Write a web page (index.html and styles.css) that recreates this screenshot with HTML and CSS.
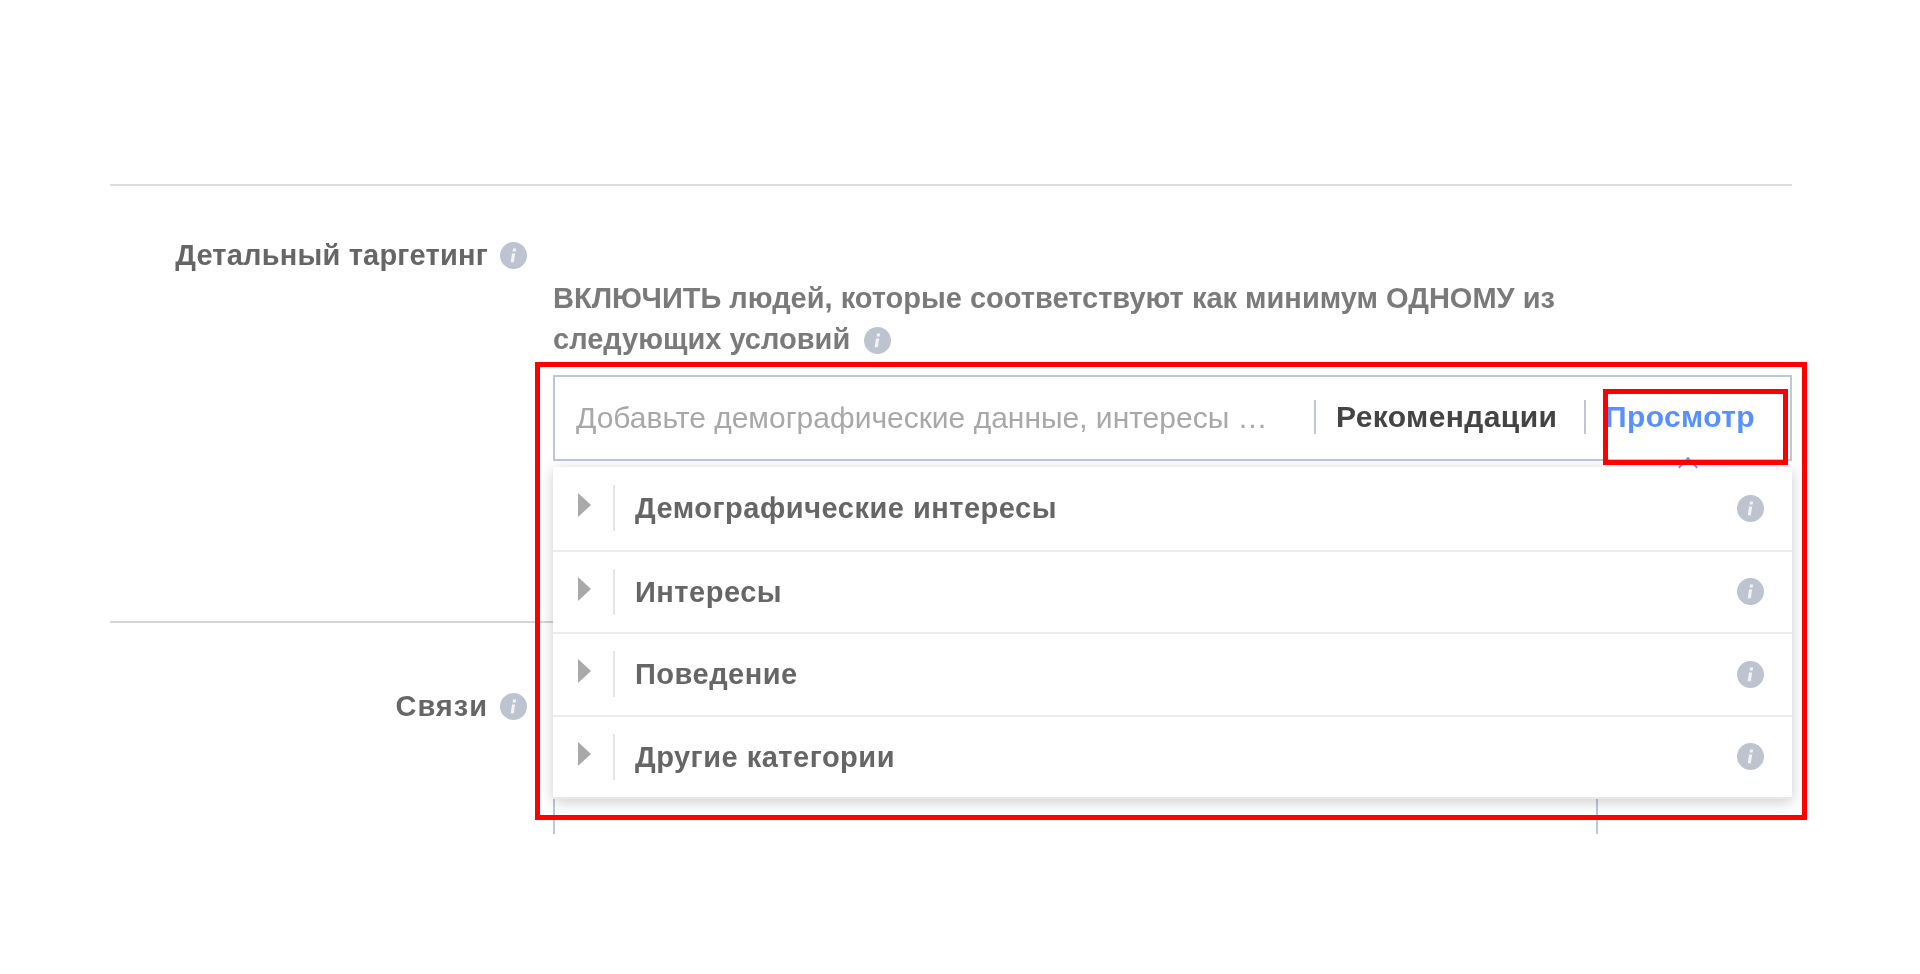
FILE: index.html
```html
<!DOCTYPE html>
<html lang="ru">
<head>
<meta charset="utf-8">
<title>Детальный таргетинг</title>
<link rel="stylesheet" href="styles.css">
</head>
<body>
<svg class="defs" width="0" height="0" aria-hidden="true">
  <symbol id="info" viewBox="0 0 26 26">
    <circle cx="13" cy="13" r="13" fill="#bec4cf"/>
    <path d="M12.6 6.2h3l-.5 3h-3zM11.6 11h3l-1.3 8.6h-3z" fill="#f1f3f6"/>
  </symbol>
</svg>
<main class="panel">
  <section class="row row-targeting">
    <div class="label"><span>Детальный таргетинг</span><svg class="info"><use href="#info"/></svg></div>
    <div class="body">
      <p class="hint">ВКЛЮЧИТЬ людей, которые соответствуют как минимум ОДНОМУ из следующих условий<svg class="info info-inline"><use href="#info"/></svg></p>
      <div class="search">
        <span class="placeholder">Добавьте демографические данные, интересы …</span>
        <span class="tab tab-suggest">Рекомендации</span>
        <span class="tab tab-browse">Просмотр</span>
      </div>
    </div>
  </section>
  <section class="row row-links">
    <div class="label label-links"><span>Связи</span><svg class="info"><use href="#info"/></svg></div>
    <div class="body">
      <div class="links-box"><span class="links-text">Добавьте Связи</span></div>
    </div>
  </section>
  <div class="menu">
    <div class="menu-item"><i class="arrow"></i><span class="menu-text">Демографические интересы</span><svg class="info"><use href="#info"/></svg></div>
    <div class="menu-item"><i class="arrow"></i><span class="menu-text">Интересы</span><svg class="info"><use href="#info"/></svg></div>
    <div class="menu-item"><i class="arrow"></i><span class="menu-text">Поведение</span><svg class="info"><use href="#info"/></svg></div>
    <div class="menu-item"><i class="arrow"></i><span class="menu-text">Другие категории</span><svg class="info"><use href="#info"/></svg></div>
  </div>
  <div class="caret"></div>
  <div class="frame frame-large"></div>
  <div class="frame frame-small"></div>
</main>
</body>
</html>
```
FILE: styles.css
```css
* { box-sizing: border-box; }
html, body { margin: 0; height: 974px; background: #fff; overflow: hidden; }
body { font-family: "Liberation Sans", Arial, sans-serif; color: #666; }
.defs { position: absolute; }
.panel { position: relative; width: 1810px; height: 650px; margin: 184px 0 0 110px; overflow: hidden; filter: blur(.5px); }
.row { display: grid; grid-template-columns: 417px 1239px; column-gap: 26px; width: 1682px; border-top: 2px solid #dcdddf; }
.row-targeting { height: 437px; }
.row-links { height: 300px; border-top-color: #d4d5d7; }
.label { display: flex; justify-content: flex-end; align-items: center; gap: 12px; height: 34px; margin-top: 52px; font-size: 29px; font-weight: 700; letter-spacing: .2px; color: #666; }
.label-links { margin-top: 66px; letter-spacing: 1px; }
.info { display: block; flex: none; width: 27px; height: 27px; }
.body { min-width: 0; }
.hint { width: 1090px; margin: 92px 0 0; font-size: 29px; line-height: 41px; font-weight: 700; color: #7a7a7a; }
.info-inline { display: inline-block; margin-left: 14px; vertical-align: -5px; }
.search { display: flex; align-items: center; height: 86px; margin-top: 15px; padding-left: 21px; border: 2px solid #bdc7d8; background: #fff; }
.placeholder { width: 738px; font-size: 30px; color: #a8a8a8; white-space: nowrap; overflow: hidden; }
.tab { display: flex; align-items: center; height: 34px; font-size: 30px; font-weight: 700; letter-spacing: .4px; border-left: 2px solid #bdc7d8; margin-top: -2px; }
.tab-suggest { width: 270px; padding-left: 20px; color: #444; }
.tab-browse { padding-left: 19px; color: #5890ff; }
.links-box { height: 400px; width: 1045px; margin-top: 100px; padding: 150px 0 0 21px; border: 2px solid #bdc7d8; font-size: 30px; color: #a8a8a8; }
.menu { position: absolute; left: 443px; top: 283px; width: 1239px; background: #fff; border-bottom: 2px solid #e9e9e9; box-shadow: 0 3px 14px rgba(0,0,0,.2); }
.menu-item { display: flex; align-items: center; height: 82.5px; padding: 0 28px 0 25px; border-top: 2px solid #ececec; }
.menu-item:first-child { border-top: 0; }
.arrow { display: block; width: 0; height: 0; margin-top: -6px; border-left: 13px solid #a9a9a9; border-top: 12px solid transparent; border-bottom: 12px solid transparent; }
.menu-text { flex: 1; margin-left: 22px; padding-left: 22px; font-size: 29px; font-weight: 700; letter-spacing: .5px; color: #666; background: linear-gradient(#e6e6e6, #e6e6e6) 0 50% / 2px 46px no-repeat; line-height: 50px; }
.caret { position: absolute; left: 1571px; top: 276px; width: 14px; height: 14px; background: #fff; border-left: 2px solid #5890ff; border-top: 2px solid #5890ff; transform: rotate(45deg); }
.frame { position: absolute; border: 5px solid #f00; }
.frame-large { left: 425px; top: 178px; width: 1272px; height: 458px; }
.frame-small { left: 1493px; top: 205px; width: 185px; height: 76px; }
```
